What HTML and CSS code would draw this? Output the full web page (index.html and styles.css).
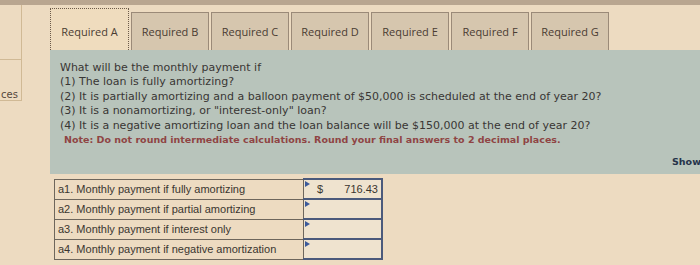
FILE: index.html
```html
<!DOCTYPE html>
<html>
<head>
<meta charset="utf-8">
<link rel="stylesheet" href="styles.css">
</head>
<body>
<div class="topbar"></div>
<div class="layout">
  <div class="side">
    <div class="side-box top"></div>
    <div class="side-box lower"><span class="side-text">ces</span></div>
  </div>
  <div class="main">
    <div class="tabs">
      <div class="tab active">Required A</div>
      <div class="tab">Required B</div>
      <div class="tab">Required C</div>
      <div class="tab">Required D</div>
      <div class="tab">Required E</div>
      <div class="tab">Required F</div>
      <div class="tab">Required G</div>
    </div>
    <div class="panel">
      <div class="question">
        <p>What will be the monthly payment if</p>
        <p>(1) The loan is fully amortizing?</p>
        <p>(2) It is partially amortizing and a balloon payment of $50,000 is scheduled at the end of year 20?</p>
        <p>(3) It is a nonamortizing, or "interest-only" loan?</p>
        <p>(4) It is a negative amortizing loan and the loan balance will be $150,000 at the end of year 20?</p>
        <p class="note">Note: Do not round intermediate calculations. Round your final answers to 2 decimal places.</p>
      </div>
      <div class="show">Show</div>
    </div>
    <table class="answers">
      <tr><td class="label">a1. Monthly payment if fully amortizing</td><td class="input"><span class="flag"></span><span class="dollar">$</span><span class="val">716.43</span></td></tr>
      <tr><td class="label">a2. Monthly payment if partial amortizing</td><td class="input"><span class="flag"></span></td></tr>
      <tr><td class="label">a3. Monthly payment if interest only</td><td class="input"><span class="flag"></span></td></tr>
      <tr><td class="label">a4. Monthly payment if negative amortization</td><td class="input"><span class="flag"></span></td></tr>
    </table>
  </div>
</div>
</body>
</html>
```
FILE: styles.css
```css
html, body {
  margin: 0;
  padding: 0;
}
body {
  width: 700px;
  height: 265px;
  overflow: hidden;
  background: #eddbc1;
  font-family: "DejaVu Sans", Verdana, sans-serif;
}
.topbar {
  height: 5px;
  background: #b9a690;
}
.layout {
  display: flex;
}
.side {
  width: 22px;
  flex: none;
  display: flex;
  flex-direction: column;
}
.side-box {
  border-right: 1px solid #d0b995;
  border-bottom: 1px solid #d0b995;
}
.side-box.top {
  height: 54px;
}
.side-box.lower {
  height: 40px;
  display: flex;
  align-items: flex-end;
}
.side-text {
  font-size: 10px;
  color: #55483c;
  margin-bottom: 0;
  margin-left: 1px;
}
.main {
  margin-left: 28px;
  width: 660px;
  flex: none;
}
.tabs {
  display: flex;
  align-items: flex-end;
  padding-top: 3px;
}
.tab {
  width: 78px;
  height: 38px;
  margin-right: 2px;
  background: #d6c6ae;
  border: 1px solid #9b8a78;
  border-bottom: none;
  box-sizing: border-box;
  display: flex;
  align-items: center;
  justify-content: center;
  font-family: "Open Sans", sans-serif;
  font-size: 11px;
  color: #4a3c33;
}
.tab.active {
  width: 79px;
  height: 42px;
  background: #efdcbe;
  border: 1px dotted #6b5a4a;
  border-bottom: none;
  padding-top: 3px;
}
.panel {
  background: #b8c4bb;
  height: 124px;
  padding: 11px 0 0 10px;
  box-sizing: border-box;
  display: flex;
  flex-direction: column;
  justify-content: space-between;
}
.question p {
  margin: 0;
  font-size: 11px;
  line-height: 14.4px;
  color: #393634;
}
.question p.note {
  color: #8f4444;
  font-weight: bold;
  font-size: 9.5px;
  padding-left: 4px;
}
.show {
  align-self: flex-end;
  font-size: 9.5px;
  font-weight: bold;
  color: #26334a;
  margin-right: 10px;
  width: 28px;
  margin-bottom: 7px;
}
.answers {
  margin: 4px 0 0 4px;
  border-collapse: collapse;
  font-family: "Liberation Sans", Arial, sans-serif;
  font-size: 11px;
  color: #3a3630;
}
.answers td {
  height: 18px;
  padding: 0 3px;
  border: 1px solid #6e665c;
}
.answers td.label {
  width: 242px;
}
.answers td.input {
  width: 71px;
  position: relative;
  border: 2px solid #4b5a7c;
  border-left: 1px solid #4b5a7c;
  background: #efe3cf;
}
.flag {
  position: absolute;
  left: 1px;
  top: 1px;
  width: 0;
  height: 0;
  border-top: 3px solid transparent;
  border-bottom: 3px solid transparent;
  border-left: 5px solid #3c5a9a;
}
.dollar {
  margin-left: 10px;
}
.val {
  float: right;
}
```
